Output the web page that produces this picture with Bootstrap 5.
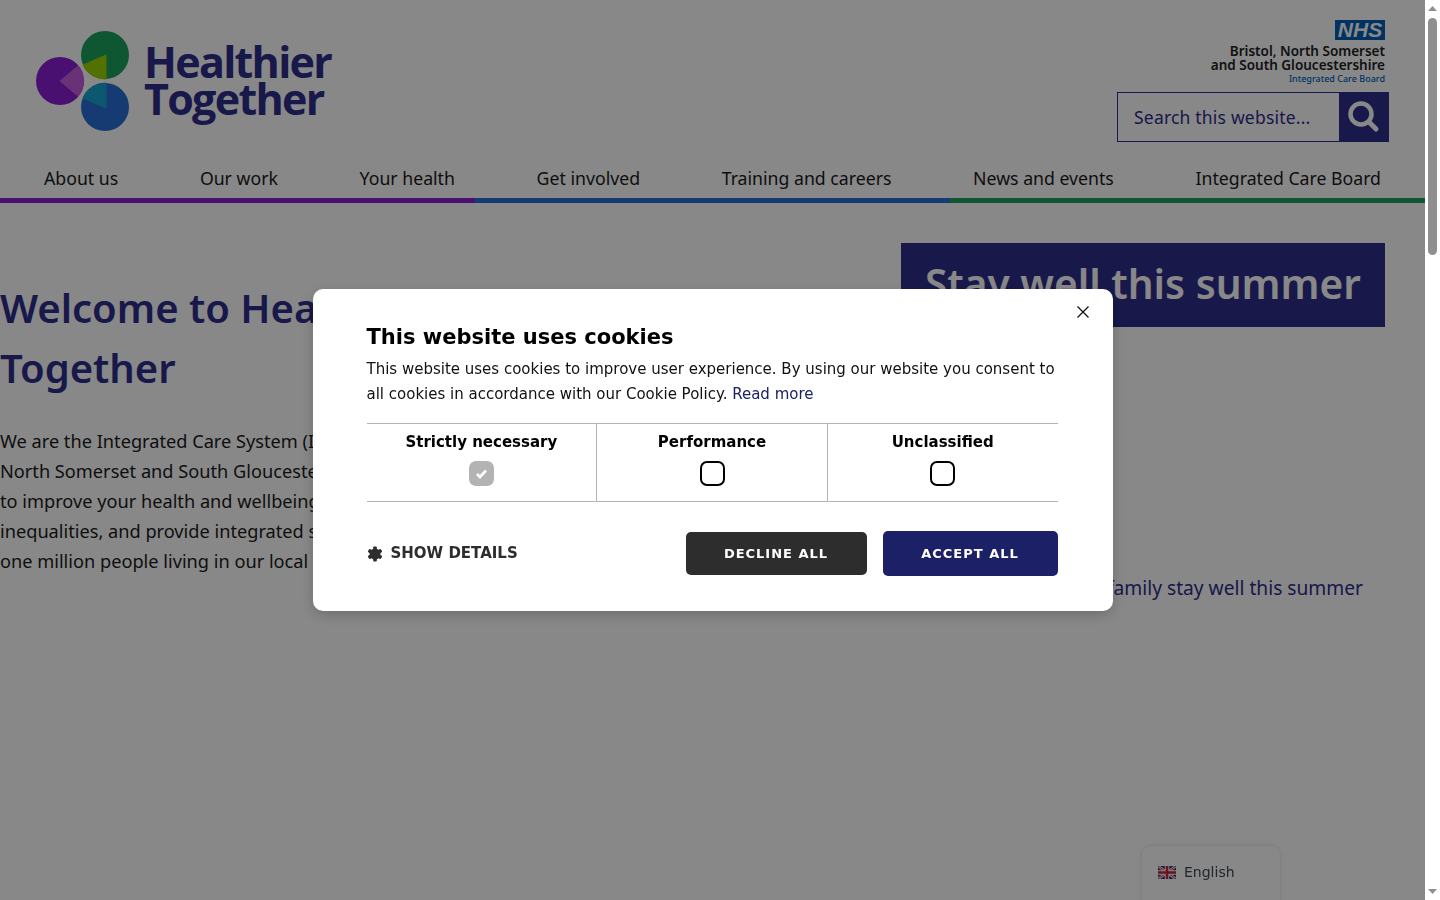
<!DOCTYPE html>
<html lang="en">
<head>
    <meta charset="UTF-8">
    <meta name="viewport" content="width=device-width, initial-scale=1.0">
    <title>Healthier Together</title>
    <link href="https://cdn.jsdelivr.net/npm/bootstrap@5.3.0/dist/css/bootstrap.min.css" rel="stylesheet">
    <style>
        html, body { height: 900px; overflow: hidden; }
        body {
            font-family: "Noto Sans", "Open Sans", sans-serif;
            color: #1c1c1c;
            background: #fff;
        }
        .page-wrap { width: 1425px; }

        /* header */
        .site-top { height: 160px; padding: 20px 36px 0 36px; }
        .logo-mark { width: 96px; height: 102px; margin-top: 11px; }
        .logo-words {
            font-family: "Open Sans", sans-serif;
            font-weight: 700;
            font-size: 43px;
            line-height: 37px;
            letter-spacing: -1.7px;
            color: #2e2e8c;
            margin: 23px 0 0 12px;
        }
        .nhs-block { padding-right: 4px; line-height: 14px; }
        .nhs-box {
            width: 50px; height: 20px;
            background: #005eb8;
            color: #fff;
            font: italic 700 21px/20px "Liberation Sans", sans-serif;
            text-align: center;
        }
        .nhs-name { font-weight: 600; font-size: 13.5px; color: #222; margin-top: 4px; }
        .nhs-sub { font-size: 9px; font-weight: 500; color: #005eb8; line-height: 13px; }
        .search-box { width: 272px; height: 50px; margin-top: 7px; border: 1px solid #2e2e8c; }
        .search-text { font-size: 17.5px; letter-spacing: .2px; color: #2e2e8c; padding-left: 16px; }
        .search-go { width: 50px; height: 50px; margin: -1px; background: #2e2e8c; }

        /* nav */
        .main-links { padding: 0 4px; height: 38px; }
        .main-links a {
            padding: 0 40px;
            font-size: 17.7px;
            line-height: 36px;
            color: #1c1c1c;
            text-decoration: none;
        }
        .tri-bar { height: 5px; }
        .tri-bar div { flex: 1; }
        .tri-purple { background: #8a1fd6; }
        .tri-blue { background: #2a6fd8; }
        .tri-green { background: #1ca35e; }

        /* content */
        .page-body { padding: 40px 40px 0 0; }
        .intro h1 {
            font-weight: 600;
            font-size: 40px;
            line-height: 60px;
            color: #2e2e8c;
            margin: 35px 0 28px;
        }
        .intro p { font-size: 18.2px; line-height: 30px; color: #1c1c1c; }
        .side-panel { width: 484px; }
        .side-banner {
            height: 84px;
            padding: 0 24px;
            background: #2e2e8c;
            color: #fff;
            font-weight: 600;
            font-size: 40.6px;
            line-height: 82px;
            white-space: nowrap;
        }
        .side-link {
            margin-top: 247px;
            padding-right: 22px;
            font-size: 19.2px;
            text-align: right;
            color: #2e2e8c;
            white-space: nowrap;
        }

        /* language widget */
        .lang-pick {
            position: fixed;
            left: 1141px; bottom: -10px;
            width: 140px; height: 65px;
            padding: 16px;
            background: #fff;
            border: 1px solid #f0f0f0;
            border-radius: 10px;
            font-family: "DejaVu Sans", sans-serif;
            font-size: 14px;
            line-height: 20px;
            color: #3c4a5a;
            box-shadow: 0 0 4px rgba(0,0,0,.06);
        }

        /* cookie dialog */
        .cookie-shade {
            position: fixed;
            inset: 0 15px 0 0;
            background: rgba(0, 0, 0, .467);
            z-index: 50;
        }
        .cookie-box {
            position: relative;
            width: 800px;
            height: 322px;
            padding: 36px 55px 0 54px;
            background: #fff;
            border-radius: 10px;
            font-family: "DejaVu Sans", sans-serif;
            box-shadow: 0 4px 14px rgba(0,0,0,.2);
            color: #111;
        }
        .cookie-x { position: absolute; top: 17px; right: 24px; width: 12px; height: 12px; display: block; }
        .cookie-box h2 { font-size: 21px; font-weight: 700; line-height: 25px; margin: 0; color: #000; }
        .cookie-box p { font-size: 15px; line-height: 25px; margin: 7px 0 16px; }
        .cookie-box p a { color: #1c2066; text-decoration: none; }
        .cookie-table { border-top: 1px solid #b3b3b3; border-bottom: 1px solid #b3b3b3; height: 79px; }
        .cookie-cell { flex: 1; text-align: center; padding-top: 8px; font-size: 15px; font-weight: 700; line-height: 20px; color: #000; }
        .cookie-cell + .cookie-cell { border-left: 1px solid #b3b3b3; }
        .cookie-tick { display: block; width: 25px; height: 25px; margin: 9px auto 0; border: 2px solid #000; border-radius: 7px; }
        .cookie-tick.locked { border-color: #b3b3b3; background: #b3b3b3; }
        .cookie-foot { margin-top: 29px; }
        .details-link { font-size: 15px; font-weight: 700; color: #2d2d2d; }
        .cookie-btn {
            font-size: 13px;
            font-weight: 700;
            letter-spacing: 1px;
            color: #fff;
            border-radius: 5px;
            border: 0;
            padding: 0;
        }
        .cookie-btn.dark { width: 181px; height: 43px; background: #2d2d2d; }
        .cookie-btn.navy { width: 175px; height: 45px; background: #1c2066; }
        .cookie-btn:hover { color: #fff; }

        /* browser scrollbar */
        .bar-rail { position: fixed; top: 0; right: 0; bottom: 0; width: 15px; background: #fff; z-index: 60; }
        .bar-thumb { position: absolute; left: 3px; top: 18px; width: 9px; height: 237px; border-radius: 5px; background: #8f8f8f; }
        .bar-arrow { position: absolute; left: 3px; width: 9px; height: 5px; }
    </style>
</head>
<body>
    <div class="page-wrap">
        <div class="site-top d-flex justify-content-between align-items-start">
            <div class="d-flex">
                <svg class="logo-mark" viewBox="36 31 96 102">
                    <circle cx="105" cy="55" r="24" fill="#1ca35e"/>
                    <circle cx="60" cy="81" r="24" fill="#8a1fd6"/>
                    <circle cx="105" cy="107" r="24" fill="#2a6fd8"/>
                    <path d="M106 55V79A24 24 0 0 1 83 65Z" fill="#9ad400" stroke="#9ad400" stroke-linejoin="round"/>
                    <path d="M60 81L78 66A24 24 0 0 1 78 96Z" fill="#c65fe0" stroke="#c65fe0" stroke-linejoin="round"/>
                    <path d="M106 108V83A24 24 0 0 0 83 98Z" fill="#17a6cf" stroke="#17a6cf" stroke-linejoin="round"/>
                </svg>
                <div class="logo-words">Healthier<br>Together</div>
            </div>
            <div class="d-flex flex-column align-items-end">
                <div class="nhs-block text-end d-flex flex-column align-items-end">
                    <div class="nhs-box">NHS</div>
                    <div class="nhs-name">Bristol, North Somerset<br>and South Gloucestershire</div>
                    <div class="nhs-sub">Integrated Care Board</div>
                </div>
                <div class="search-box d-flex align-items-center justify-content-between">
                    <span class="search-text">Search this website...</span>
                    <span class="search-go d-flex align-items-center justify-content-center">
                        <svg width="32" height="32" viewBox="0 0 32 32">
                            <circle cx="13" cy="13" r="10.5" fill="none" stroke="#fff" stroke-width="4.5"/>
                            <path d="M21 21L28 28" stroke="#fff" stroke-width="5" stroke-linecap="round"/>
                        </svg>
                    </span>
                </div>
            </div>
        </div>

        <nav class="main-links d-flex justify-content-between">
            <a href="#">About us</a>
            <a href="#">Our work</a>
            <a href="#">Your health</a>
            <a href="#">Get involved</a>
            <a href="#">Training and careers</a>
            <a href="#">News and events</a>
            <a href="#">Integrated Care Board</a>
        </nav>
        <div class="tri-bar d-flex">
            <div class="tri-purple"></div>
            <div class="tri-blue"></div>
            <div class="tri-green"></div>
        </div>

        <div class="page-body d-flex justify-content-between align-items-start">
            <div class="intro">
                <h1>Welcome to Healthier<br>Together</h1>
                <p>We are the Integrated Care System (ICS) for Bristol,<br>
                North Somerset and South Gloucestershire, working together<br>
                to improve your health and wellbeing, reduce health<br>
                inequalities, and provide integrated services for the<br>
                one million people living in our local area.</p>
            </div>
            <div class="side-panel">
                <div class="side-banner">Stay well this summer</div>
                <div class="side-link">Helping you and your family stay well this summer</div>
            </div>
        </div>
    </div>

    <div class="lang-pick d-flex align-items-start gap-2">
        <svg width="18" height="13" viewBox="0 0 18 13" class="mt-1">
            <rect width="18" height="13" fill="#2a3a8c"/>
            <path d="M0 0L18 13M18 0L0 13" stroke="#fff" stroke-width="2.6"/>
            <path d="M0 0L18 13M18 0L0 13" stroke="#d0213a" stroke-width="1"/>
            <path d="M9 0V13M0 6.5H18" stroke="#fff" stroke-width="4.4"/>
            <path d="M9 0V13M0 6.5H18" stroke="#d0213a" stroke-width="2.6"/>
        </svg>
        <span>English</span>
    </div>

    <div class="cookie-shade d-flex align-items-center justify-content-center">
        <div class="cookie-box">
            <svg class="cookie-x" viewBox="0 0 12 12"><path d="M.5 .5L11.5 11.5M11.5 .5L.5 11.5" stroke="#111" stroke-width="1.3"/></svg>
            <h2>This website uses cookies</h2>
            <p>This website uses cookies to improve user experience. By using our website you consent to all cookies in accordance with our Cookie Policy. <a href="#">Read more</a></p>
            <div class="cookie-table d-flex">
                <div class="cookie-cell">Strictly necessary
                    <span class="cookie-tick locked">
                        <svg width="21" height="21" viewBox="0 0 21 21" class="d-block"><path d="M6 11L9 14L15 7.5" fill="none" stroke="#fff" stroke-width="2.6"/></svg>
                    </span>
                </div>
                <div class="cookie-cell">Performance<span class="cookie-tick"></span></div>
                <div class="cookie-cell">Unclassified<span class="cookie-tick"></span></div>
            </div>
            <div class="cookie-foot d-flex justify-content-between align-items-center">
                <div class="details-link d-flex align-items-center gap-2">
                    <svg width="16" height="16" viewBox="0 0 16 16">
                        <g fill="#2d2d2d">
                            <rect x="6.2" y="0.5" width="3.6" height="15" rx=".8"/>
                            <rect x="6.2" y="0.5" width="3.6" height="15" rx=".8" transform="rotate(60 8 8)"/>
                            <rect x="6.2" y="0.5" width="3.6" height="15" rx=".8" transform="rotate(120 8 8)"/>
                        </g>
                        <circle cx="8" cy="8" r="4.2" fill="none" stroke="#2d2d2d" stroke-width="2.6"/>
                    </svg>
                    SHOW DETAILS
                </div>
                <div class="d-flex align-items-center gap-3">
                    <button class="btn cookie-btn dark">DECLINE ALL</button>
                    <button class="btn cookie-btn navy">ACCEPT ALL</button>
                </div>
            </div>
        </div>
    </div>

    <div class="bar-rail">
        <svg class="bar-arrow" style="top:6px" viewBox="0 0 9 5"><path d="M4.5 0L9 5H0Z" fill="#8f8f8f"/></svg>
        <div class="bar-thumb"></div>
        <svg class="bar-arrow" style="bottom:6px" viewBox="0 0 9 5"><path d="M0 0H9L4.5 5Z" fill="#8f8f8f"/></svg>
    </div>

    <script src="https://cdn.jsdelivr.net/npm/bootstrap@5.3.0/dist/js/bootstrap.bundle.min.js"></script>
</body>
</html>
